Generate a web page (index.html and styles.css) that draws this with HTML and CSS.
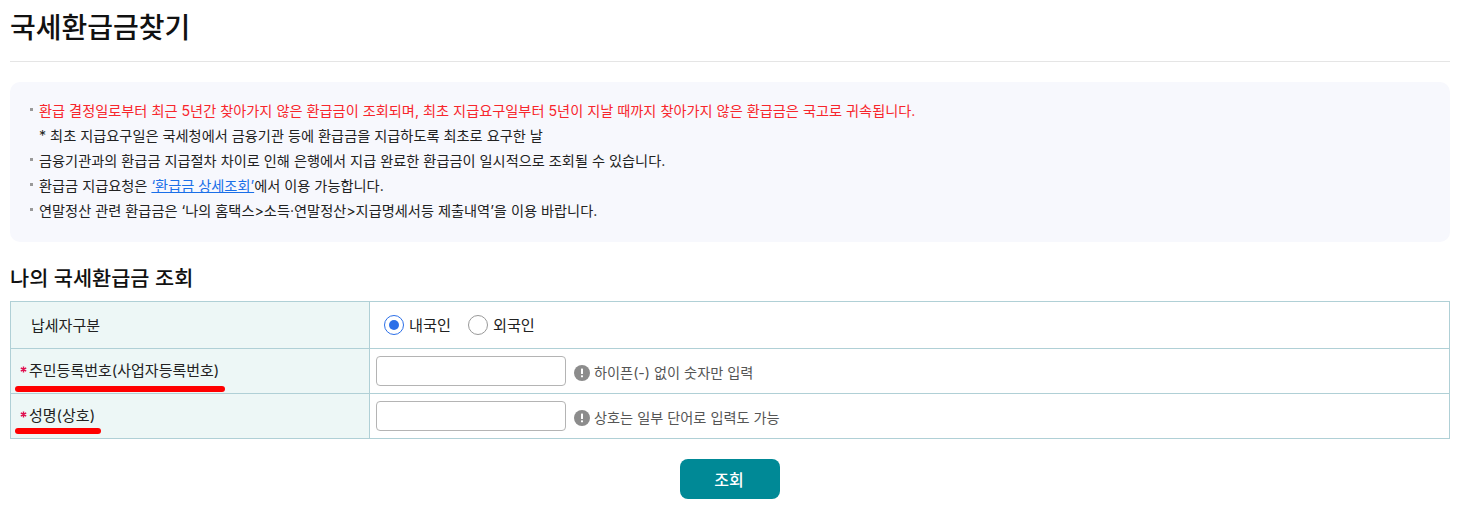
FILE: index.html
```html
<!DOCTYPE html>
<html lang="ko">
<head>
<meta charset="utf-8">
<title>국세환급금찾기</title>
<link rel="stylesheet" href="styles.css">
</head>
<body>
<main class="page">
  <h1 class="title">국세환급금찾기</h1>
  <ul class="notice">
    <li class="red">환급 결정일로부터 최근 5년간 찾아가지 않은 환급금이 조회되며, 최초 지급요구일부터 5년이 지날 때까지 찾아가지 않은 환급금은 국고로 귀속됩니다.</li>
    <li class="sub">* 최초 지급요구일은 국세청에서 금융기관 등에 환급금을 지급하도록 최초로 요구한 날</li>
    <li>금융기관과의 환급금 지급절차 차이로 인해 은행에서 지급 완료한 환급금이 일시적으로 조회될 수 있습니다.</li>
    <li>환급금 지급요청은 <a href="#" class="link">‘환급금 상세조회’</a>에서 이용 가능합니다.</li>
    <li>연말정산 관련 환급금은 ‘나의 홈택스&gt;소득·연말정산&gt;지급명세서등 제출내역’을 이용 바랍니다.</li>
  </ul>
  <h2 class="subtitle">나의 국세환급금 조회</h2>
  <div class="form">
    <div class="row row-first">
      <div class="label plain"><span class="label-text">납세자구분</span></div>
      <div class="field radios">
        <label class="radio"><span class="dot on"></span><span class="radio-text">내국인</span></label>
        <label class="radio"><span class="dot"></span><span class="radio-text">외국인</span></label>
      </div>
    </div>
    <div class="row">
      <div class="label">
        <svg class="star" viewBox="0 0 7 7" aria-hidden="true"><path d="M3.5.4v6.2M.8 1.9l5.4 3.2M.8 5.1l5.4-3.2"/></svg>
        <span class="label-text">주민등록번호(사업자등록번호)</span><span class="mark mark-long"></span>
      </div>
      <div class="field">
        <input class="input" type="text">
        <svg class="info" viewBox="0 0 16 16" aria-hidden="true"><circle cx="8" cy="8" r="8" fill="#8c8c8c"/><rect x="7" y="3.5" width="2" height="5.5" rx=".6" fill="#fff"/><rect x="7" y="10.3" width="2" height="2" rx=".6" fill="#fff"/></svg>
        <span class="hint">하이픈(-) 없이 숫자만 입력</span>
      </div>
    </div>
    <div class="row">
      <div class="label">
        <svg class="star" viewBox="0 0 7 7" aria-hidden="true"><path d="M3.5.4v6.2M.8 1.9l5.4 3.2M.8 5.1l5.4-3.2"/></svg>
        <span class="label-text">성명(상호)</span><span class="mark mark-short"></span>
      </div>
      <div class="field">
        <input class="input" type="text">
        <svg class="info" viewBox="0 0 16 16" aria-hidden="true"><circle cx="8" cy="8" r="8" fill="#8c8c8c"/><rect x="7" y="3.5" width="2" height="5.5" rx=".6" fill="#fff"/><rect x="7" y="10.3" width="2" height="2" rx=".6" fill="#fff"/></svg>
        <span class="hint">상호는 일부 단어로 입력도 가능</span>
      </div>
    </div>
  </div>
  <div class="actions"><button class="btn" type="button">조회</button></div>
</main>
</body>
</html>
```
FILE: styles.css
```css
* { box-sizing: border-box; }
html, body { margin: 0; background: #fff; }
body {
  font-family: "Inter", "Noto Sans CJK KR", sans-serif;
  color: #222;
  font-size: 14.2px;
  overflow: hidden;
}
.page { width: 1440px; margin-left: 10px; }
.title {
  margin: 0;
  height: 62px;
  padding-top: 8px;
  font-size: 28px;
  line-height: 40px;
  font-weight: 500;
  color: #111;
  border-bottom: 1px solid #e5e5e5;
}
.notice {
  list-style: none;
  margin: 20px 0 0;
  padding: 16px 20px 17px;
  height: 160px;
  background: #f7f8fd;
  border-radius: 10px;
}
.notice li {
  position: relative;
  padding-left: 9px;
  line-height: 25px;
  height: 25px;
  white-space: nowrap;
}
.notice li::before {
  content: "";
  position: absolute;
  left: 0;
  top: 10px;
  width: 3px;
  height: 3px;
  background: #999;
}
.notice li.sub::before { display: none; }
.red { color: #f7262c; }
.link { color: #1a6fe8; text-decoration: underline; }
.subtitle {
  margin: 23px 0 0;
  height: 36px;
  font-size: 20.8px;
  line-height: 28px;
  font-weight: 500;
  color: #111;
}
.form { border: 1px solid #b0d0d6; }
.row {
  display: flex;
  height: 45px;
  border-bottom: 1px solid #b0d0d6;
}
.row:last-child { height: 44px; border-bottom: 0; }
.row-first { height: 47px; }
.label {
  position: relative;
  flex: 0 0 359px;
  display: flex;
  align-items: center;
  padding-left: 9px;
  background: #edf7f6;
  border-right: 1px solid #b0d0d6;
  font-size: 15px;
  color: #222;
}
.label.plain { padding-left: 20px; }
.label-text { margin-bottom: 4px; }
.plain .label-text { margin-bottom: 2px; }
.star {
  flex: none;
  width: 7px;
  height: 7px;
  margin: 0 2px 3px 0;
  fill: none;
  stroke: #e0104f;
  stroke-width: 1.4;
}
.mark {
  position: absolute;
  left: 4px;
  height: 6px;
  border-radius: 3px;
  background: #f00;
}
.mark-long { top: 37px; width: 210px; }
.mark-short { top: 34px; width: 86px; }
.field {
  display: flex;
  align-items: center;
  padding-left: 6px;
}
.radios { padding-left: 14px; gap: 17px; }
.radio { display: flex; align-items: center; gap: 5px; font-size: 15.2px; color: #222; }
.radio-text { margin-bottom: 2px; }
.dot {
  width: 20px;
  height: 20px;
  border: 1px solid #999;
  border-radius: 50%;
  background: #fff;
  display: flex;
  align-items: center;
  justify-content: center;
}
.dot.on { border-color: #2b6fe8; }
.dot.on::after {
  content: "";
  width: 10px;
  height: 10px;
  border-radius: 50%;
  background: #2b6fe8;
}
.input {
  width: 190px;
  height: 30px;
  margin: 0;
  border: 1px solid #b4b4b4;
  border-radius: 4px;
  background: #fff;
}
.info { width: 16px; height: 16px; margin: 4px 0 0 8px; }
.hint { margin: 2px 0 0 4px; color: #555; }
.actions { display: flex; justify-content: center; padding-top: 20px; }
.btn {
  width: 100px;
  height: 40px;
  border: 0;
  border-radius: 8px;
  background: #008996;
  color: #fff;
  font-family: inherit;
  font-size: 16px;
  font-weight: 500;
  padding: 0 2px 0 0;
}
```
